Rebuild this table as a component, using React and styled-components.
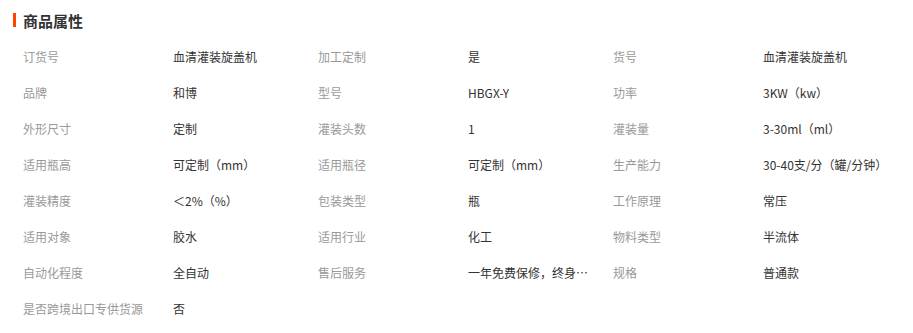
import styled, { createGlobalStyle } from "styled-components"

const GlobalStyle = createGlobalStyle`
  body {
    margin: 0;
    background: #fff;
    font-family: "Noto Sans CJK SC", "Noto Sans", sans-serif;
  }
`

const Section = styled.section`
  width: 913px;
  padding: 10px 13px 0;
  box-sizing: border-box;
`

const Title = styled.h3`
  display: flex;
  align-items: center;
  gap: 7px;
  margin: 0;
  height: 20px;
  font-size: 15px;
  font-weight: bold;
  color: #333;
  &::before {
    content: "";
    width: 3px;
    height: 14px;
    background: #ff4400;
  }
`

const Grid = styled.div`
  display: grid;
  grid-template-columns: repeat(3, 150px 145px);
  grid-auto-rows: 36px;
  margin-top: 8px;
  padding-left: 10px;
`

const Cell = styled.div`
  display: flex;
  align-items: center;
  font-size: 12px;
  color: ${(p) => (p.$label ? "#999" : "#333")};
  white-space: nowrap;
  min-width: 0;
`

const Value = styled.span`
  overflow: hidden;
  text-overflow: ellipsis;
  max-width: ${(p) => (p.$truncate ? "125px" : "none")};
`

const attrs = [
  ["订货号", "血清灌装旋盖机"],
  ["加工定制", "是"],
  ["货号", "血清灌装旋盖机"],
  ["品牌", "和博"],
  ["型号", "HBGX-Y"],
  ["功率", "3KW（kw）"],
  ["外形尺寸", "定制"],
  ["灌装头数", "1"],
  ["灌装量", "3-30ml（ml）"],
  ["适用瓶高", "可定制（mm）"],
  ["适用瓶径", "可定制（mm）"],
  ["生产能力", "30-40支/分（罐/分钟）"],
  ["灌装精度", "＜2%（%）"],
  ["包装类型", "瓶"],
  ["工作原理", "常压"],
  ["适用对象", "胶水"],
  ["适用行业", "化工"],
  ["物料类型", "半流体"],
  ["自动化程度", "全自动"],
  ["售后服务", "一年免费保修，终身维护", true],
  ["规格", "普通款"],
  ["是否跨境出口专供货源", "否"],
]

export default function App() {
  return (
    <>
      <GlobalStyle />
      <Section>
        <Title>商品属性</Title>
        <Grid>
          {attrs.map(([k, v, cut]) => [
            <Cell $label key={k + "k"}>{k}</Cell>,
            <Cell key={k + "v"}>
              <Value $truncate={cut}>{v}</Value>
            </Cell>,
          ])}
        </Grid>
      </Section>
    </>
  )
}
